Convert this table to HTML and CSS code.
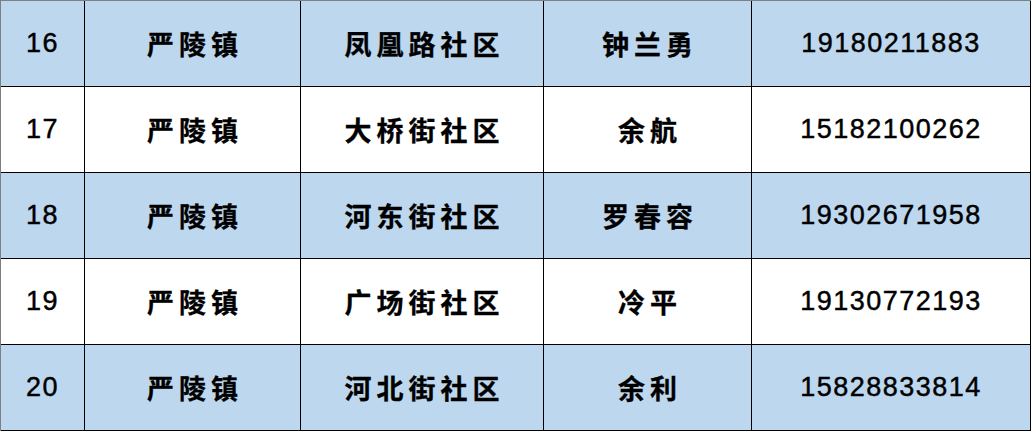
FILE: index.html
```html
<!DOCTYPE html>
<html lang="zh">
<head>
<meta charset="utf-8">
<title>社区联系表</title>
<link rel="stylesheet" href="styles.css">
</head>
<body>
<table class="grid">
  <colgroup>
    <col class="c1"><col class="c2"><col class="c3"><col class="c4"><col class="c5">
  </colgroup>
  <tbody>
    <tr class="blue">
      <td class="num">16</td><td class="zh">严陵镇</td><td class="zh">凤凰路社区</td><td class="zh">钟兰勇</td><td class="num">19180211883</td>
    </tr>
    <tr>
      <td class="num">17</td><td class="zh">严陵镇</td><td class="zh">大桥街社区</td><td class="zh">余航</td><td class="num">15182100262</td>
    </tr>
    <tr class="blue">
      <td class="num">18</td><td class="zh">严陵镇</td><td class="zh">河东街社区</td><td class="zh">罗春容</td><td class="num">19302671958</td>
    </tr>
    <tr>
      <td class="num">19</td><td class="zh">严陵镇</td><td class="zh">广场街社区</td><td class="zh">冷平</td><td class="num">19130772193</td>
    </tr>
    <tr class="blue">
      <td class="num">20</td><td class="zh">严陵镇</td><td class="zh">河北街社区</td><td class="zh">余利</td><td class="num">15828833814</td>
    </tr>
  </tbody>
</table>
</body>
</html>
```
FILE: styles.css
```css
html, body {
  margin: 0;
  padding: 0;
  background: #ffffff;
}

.grid {
  border-collapse: separate;
  border-spacing: 0;
  table-layout: fixed;
  width: 1031px;
  border-top: 1px solid #7f7f7f;
  border-left: 1px solid #7f7f7f;
}

.c1 { width: 84px; }
.c2 { width: 216px; }
.c3 { width: 243px; }
.c4 { width: 208px; }
.c5 { width: 279px; }

.grid td {
  box-sizing: border-box;
  height: 86px;
  padding: 0;
  border-right: 1px solid #000000;
  border-bottom: 1px solid #000000;
  text-align: center;
  vertical-align: middle;
  color: #000000;
  background: #ffffff;
}

.grid tr.blue td {
  background: #bdd7ee;
}

.num {
  font-family: "Liberation Sans", Arial, sans-serif;
  font-size: 27px;
  letter-spacing: 1.5px;
  font-weight: 400;
  line-height: 1;
  padding-top: 2px;
  -webkit-text-stroke: 0.45px #000000;
}

.zh {
  font-family: "Noto Sans CJK SC", sans-serif;
  font-size: 27px;
  font-weight: 700;
  letter-spacing: 5px;
  line-height: 1;
  -webkit-text-stroke: 0.3px #000000;
}

.grid td.zh {
  text-indent: 5px;
}
```
